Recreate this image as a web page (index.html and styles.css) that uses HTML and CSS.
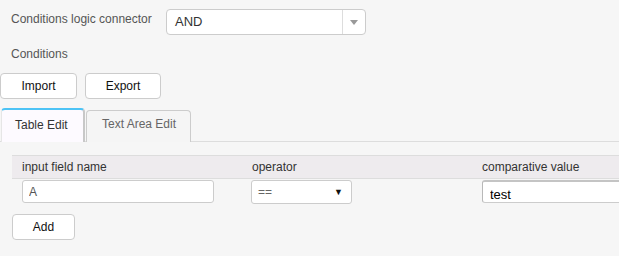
FILE: index.html
```html
<!DOCTYPE html>
<html lang="en">
<head>
    <meta charset="UTF-8">
    <title>Conditions</title>
    <link rel="stylesheet" href="styles.css">
</head>
<body>
    <div class="connector-row">
        <label class="field-label connector-label">Conditions logic connector</label>
        <div class="combo">
            <span class="combo-value">AND</span>
            <span class="combo-arrow"><span class="tri"></span></span>
        </div>
    </div>

    <div class="field-label conditions-label">Conditions</div>

    <div class="actions">
        <button type="button" class="btn btn-import">Import</button>
        <button type="button" class="btn btn-export">Export</button>
    </div>

    <div class="tabs">
        <div class="tab active">Table Edit</div>
        <div class="tab">Text Area Edit</div>
    </div>

    <div class="table-wrap">
        <table class="cond-table">
            <thead>
                <tr>
                    <th>input field name</th>
                    <th>operator</th>
                    <th>comparative value</th>
                </tr>
            </thead>
            <tbody>
                <tr>
                    <td><input class="text-input field-name" type="text" value="A"></td>
                    <td>
                        <div class="op-select">
                            <span>==</span>
                            <span class="op-arrow">&#9660;</span>
                        </div>
                    </td>
                    <td><input class="text-input value-input" type="text" value="test"></td>
                </tr>
            </tbody>
        </table>
    </div>

    <button type="button" class="btn btn-add">Add</button>
</body>
</html>
```

FILE: styles.css
```css
body {
    margin: 0;
    background-color: #f6f6f6;
    font-family: "Liberation Sans", Arial, sans-serif;
    font-size: 12px;
    line-height: 20px;
    color: #333;
    overflow: hidden;
}

.field-label {
    color: #555;
}

.connector-row {
    display: flex;
    align-items: flex-start;
    margin-top: 9px;
    padding-left: 11px;
}

.connector-label {
    width: 155px;
}

.combo {
    display: flex;
    width: 198px;
    height: 24px;
    border: 1px solid #ccc;
    border-radius: 4px;
    background-color: white;
}

.combo-value {
    flex: 1;
    padding-left: 8px;
    line-height: 24px;
    font-size: 13px;
    color: #333;
}

.combo-arrow {
    width: 22px;
    border-left: 1px solid #ddd;
    display: flex;
    align-items: center;
    justify-content: center;
}

.tri {
    width: 0;
    height: 0;
    border-left: 4px solid transparent;
    border-right: 4px solid transparent;
    border-top: 5px solid #999;
}

.conditions-label {
    margin-top: 9px;
    padding-left: 11px;
}

.actions {
    display: flex;
    gap: 8px;
    margin-top: 9px;
}

.btn {
    height: 26px;
    padding: 0;
    border: 1px solid #ccc;
    border-radius: 4px;
    background-color: white;
    font-family: inherit;
    font-size: 12px;
    color: #111;
    cursor: pointer;
}

.btn-import {
    width: 77px;
}

.btn-export {
    width: 76px;
}

.tabs {
    display: flex;
    align-items: flex-end;
    gap: 1px;
    margin-top: 9px;
    padding-left: 1px;
    border-bottom: 1px solid #ddd;
}

.tab {
    box-sizing: border-box;
    width: 105px;
    margin-bottom: -1px;
    padding: 3px 0 8px 15px;
    border: 1px solid #ccc;
    border-bottom: none;
    border-radius: 4px 4px 0 0;
    background-color: #f5f5f5;
    color: #666;
}

.tab.active {
    width: 84px;
    padding: 5px 0 7px 13px;
    border-top: 2px solid #4cc3f5;
    border-left: 1px solid #e6e6e6;
    border-right: 2px solid #c8c8c8;
    background-color: #fdfaff;
    color: #333;
}

.table-wrap {
    margin-top: 13px;
    padding-left: 12px;
}

.cond-table {
    border-collapse: collapse;
    table-layout: fixed;
    width: 690px;
}

.cond-table th {
    width: 230px;
    height: 23px;
    padding: 0 10px;
    border-top: 1px solid #ddd;
    border-bottom: 1px solid #ddd;
    background-color: #eeebee;
    text-align: left;
    font-weight: normal;
    color: #333;
    box-sizing: border-box;
}

.cond-table td {
    padding: 1px 0 0 10px;
    vertical-align: top;
}

.text-input {
    display: block;
    height: 23px;
    box-sizing: border-box;
    margin: 0;
    border: 1px solid #ccc;
    border-radius: 3px;
    background-color: white;
    font-family: inherit;
    font-size: 12px;
    padding: 0 6px;
    color: #555;
}

.field-name {
    width: 192px;
}

.value-input {
    width: 220px;
    border-top: 2px solid #c4c4c4;
    border-left: 1px solid #b8b8b8;
    padding: 4px 7px 0;
    font-size: 13px;
    color: #000;
}

.op-select {
    display: flex;
    justify-content: space-between;
    align-items: center;
    width: 101px;
    height: 24px;
    box-sizing: border-box;
    margin-left: -1px;
    padding: 0 8px 0 6px;
    border: 1px solid #ccc;
    border-radius: 3px;
    background-color: white;
    color: #666;
}

.op-arrow {
    font-size: 9px;
    color: #111;
}

.btn-add {
    display: block;
    width: 63px;
    margin: 10px 0 0 12px;
}
```
